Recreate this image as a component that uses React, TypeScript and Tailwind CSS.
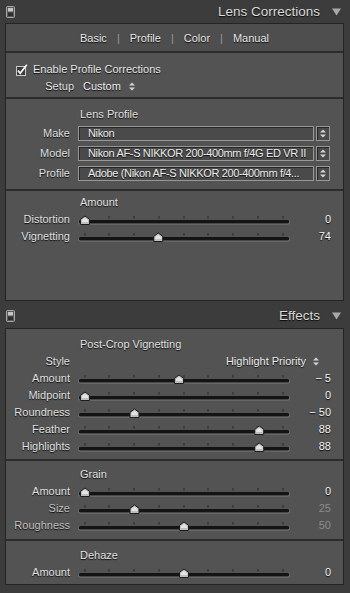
import React from "react";

const TS = "[text-shadow:0_1px_1px_rgba(0,0,0,0.9)]";

function SwitchIcon() {
  return (
    <svg width="9" height="12" viewBox="0 0 9 12">
      <rect x="0.5" y="0.5" width="8" height="11" rx="1" fill="#5a5a5a" stroke="#a8a8a8" />
      <rect x="2" y="2" width="5" height="3.5" fill="#c4c4c4" />
      <rect x="2" y="6.5" width="5" height="3.5" fill="#2e2e2e" />
    </svg>
  );
}

function DownTri() {
  return (
    <svg width="9" height="8" viewBox="0 0 9 8">
      <polygon points="0,0.5 9,0.5 4.5,7.5" fill="#a9a9a9" />
    </svg>
  );
}

function UpDown() {
  return (
    <svg width="6" height="9" viewBox="0 0 6 9">
      <polygon points="0,3.6 3,0.4 6,3.6" fill="#d4d4d4" />
      <polygon points="0,5.4 3,8.6 6,5.4" fill="#d4d4d4" />
    </svg>
  );
}

function Header({ title, extra }: { title: string; extra: string }) {
  return (
    <div className={`flex items-center pl-[6px] pr-[9px] ${extra}`}>
      <SwitchIcon />
      <div className="flex-1" />
      <span className={`text-[13.5px] text-[#dadada] ${TS}`}>{title}</span>
      <div className="ml-[12px]">
        <DownTri />
      </div>
    </div>
  );
}

const TICKS = [7, 31, 56, 81, 106, 130, 155, 180, 205];

function SliderSvg({ frac }: { frac: number }) {
  const cx = 7 + frac * 198;
  return (
    <svg width="212" height="17" viewBox="0 0 212 17">
      {TICKS.map((t) => (
        <rect key={t} x={t - 0.5} y="5" width="1" height="2.5" fill="#262626" />
      ))}
      <rect x="0" y="8.5" width="212" height="5" rx="2.5" fill="#7c7c7c" />
      <rect x="0.7" y="8.8" width="210.6" height="3.8" rx="1.9" fill="#141414" />
      <polygon
        points={`${cx},5 ${cx + 4.5},8.3 ${cx + 4.5},13.5 ${cx - 4.5},13.5 ${cx - 4.5},8.3`}
        fill="#bdbdbd"
        stroke="#1e1e1e"
        strokeWidth="1"
      />
      <polygon
        points={`${cx},6.8 ${cx + 3},9 ${cx + 3},11 ${cx - 3},11 ${cx - 3},9`}
        fill="#e4e4e4"
      />
    </svg>
  );
}

function SliderRow({
  label,
  value,
  frac,
  dim,
}: {
  label: string;
  value: string;
  frac: number;
  dim?: boolean;
}) {
  return (
    <div className="flex h-[17px] items-center">
      <div className={`w-[64px] text-right ${TS} ${dim ? "text-[#c2c2c2]" : "text-[#e0e0e0]"}`}>
        {label}
      </div>
      <div className="ml-[8px] h-[17px] w-[212px]">
        <SliderSvg frac={frac} />
      </div>
      <div
        className={`w-[41px] text-right ${dim ? "text-[#8c8c8c]" : `text-[#f4f4f4] ${TS}`}`}
      >
        {value}
      </div>
    </div>
  );
}

function Title({ text, h }: { text: string; h: string }) {
  return (
    <div className={`flex items-center pl-[74px] text-[#e2e2e2] ${TS} ${h}`}>{text}</div>
  );
}

function SelectRow({ label, value }: { label: string; value: string }) {
  return (
    <div className="flex h-[20px] items-center">
      <div className={`w-[64px] text-right text-[#e0e0e0] ${TS}`}>{label}</div>
      <div className="ml-[8px] flex h-[15px] w-[236px] items-center overflow-hidden whitespace-nowrap border border-[#979797] bg-[#4a4a4a] pl-[9px] tracking-[-0.35px] text-[#eeeeee] shadow-[inset_1px_1px_0_#262626]">
        <span className={TS}>{value}</span>
      </div>
      <div className="ml-[2px] flex h-[15px] w-[14px] items-center justify-center border border-[#979797] bg-[#4a4a4a] shadow-[inset_1px_1px_0_#262626]">
        <UpDown />
      </div>
    </div>
  );
}

function CheckBox() {
  return (
    <svg width="12" height="12" viewBox="0 0 12 12">
      <rect x="0.5" y="2.5" width="9" height="9" fill="#3a3a3a" stroke="#c8c8c8" />
      <path d="M2 6.5 L4.2 9.2 L10.8 0.8" fill="none" stroke="#f2f2f2" strokeWidth="1.8" />
    </svg>
  );
}

export default function App() {
  return (
    <div
      className="h-[593px] w-[350px] overflow-hidden bg-[#3c3c3c] text-[11px] leading-none"
      style={{ fontFamily: '"Liberation Sans", Arial, sans-serif' }}
    >
      <Header title="Lens Corrections" extra="h-[23px]" />
      <div className="ml-[5px] flex h-[278px] w-[339px] flex-col border border-[#242424] bg-[#535353]">
        <div className="flex h-[29px] items-center justify-center gap-[10px] border-b-2 border-[#2c2c2c] bg-[#4e4e4e] pt-[1px] text-[#e8e8e8]">
          <span className={TS}>Basic</span>
          <span className="text-[#9a9a9a]">|</span>
          <span className={TS}>Profile</span>
          <span className="text-[#9a9a9a]">|</span>
          <span className={TS}>Color</span>
          <span className="text-[#9a9a9a]">|</span>
          <span className={TS}>Manual</span>
        </div>
        <div className="pt-[8px] pb-[2px]">
          <div className="flex h-[17px] items-center pl-[10px]">
            <CheckBox />
            <span className={`ml-[5px] text-[#e8e8e8] ${TS}`}>Enable Profile Corrections</span>
          </div>
          <div className="flex h-[17px] items-center">
            <div className={`w-[68px] text-right text-[#e0e0e0] ${TS}`}>Setup</div>
            <span className={`ml-[9px] text-[#eeeeee] ${TS}`}>Custom</span>
            <div className="ml-[8px]">
              <UpDown />
            </div>
          </div>
        </div>
        <div className="border-t-2 border-[#2c2c2c] pt-[6px] pb-[6px]">
          <Title text="Lens Profile" h="h-[18px]" />
          <SelectRow label="Make" value="Nikon" />
          <SelectRow label="Model" value="Nikon AF-S NIKKOR 200-400mm f/4G ED VR II" />
          <SelectRow label="Profile" value="Adobe (Nikon AF-S NIKKOR 200-400mm f/4..." />
        </div>
        <div className="flex-1 border-t-2 border-[#2c2c2c] pt-[3px]">
          <Title text="Amount" h="h-[17px]" />
          <SliderRow label="Distortion" value="0" frac={0} />
          <SliderRow label="Vignetting" value="74" frac={0.37} />
        </div>
      </div>
      <Header title="Effects" extra="h-[27px] pt-[3px]" />
      <div className="ml-[5px] flex w-[339px] flex-col border border-[#242424] bg-[#535353]">
        <div className="pt-[7px] pb-[4px]">
          <Title text="Post-Crop Vignetting" h="h-[17px]" />
          <div className="flex h-[17px] items-center">
            <div className={`w-[64px] text-right text-[#e0e0e0] ${TS}`}>Style</div>
            <div className="flex flex-1 items-center justify-end pr-[24px]">
              <span className={`text-[#eeeeee] ${TS}`}>Highlight Priority</span>
              <div className="ml-[7px]">
                <UpDown />
              </div>
            </div>
          </div>
          <SliderRow label="Amount" value="− 5" frac={0.475} />
          <SliderRow label="Midpoint" value="0" frac={0} />
          <SliderRow label="Roundness" value="− 50" frac={0.25} />
          <SliderRow label="Feather" value="88" frac={0.88} />
          <SliderRow label="Highlights" value="88" frac={0.88} />
        </div>
        <div className="border-t-2 border-[#2c2c2c] pt-[5px] pb-[5px]">
          <Title text="Grain" h="h-[17px]" />
          <SliderRow label="Amount" value="0" frac={0} />
          <SliderRow label="Size" value="25" frac={0.25} dim />
          <SliderRow label="Roughness" value="50" frac={0.5} dim />
        </div>
        <div className="border-t-2 border-[#2c2c2c] pt-[6px] pb-[3px]">
          <Title text="Dehaze" h="h-[17px]" />
          <SliderRow label="Amount" value="0" frac={0.5} />
        </div>
      </div>
    </div>
  );
}
